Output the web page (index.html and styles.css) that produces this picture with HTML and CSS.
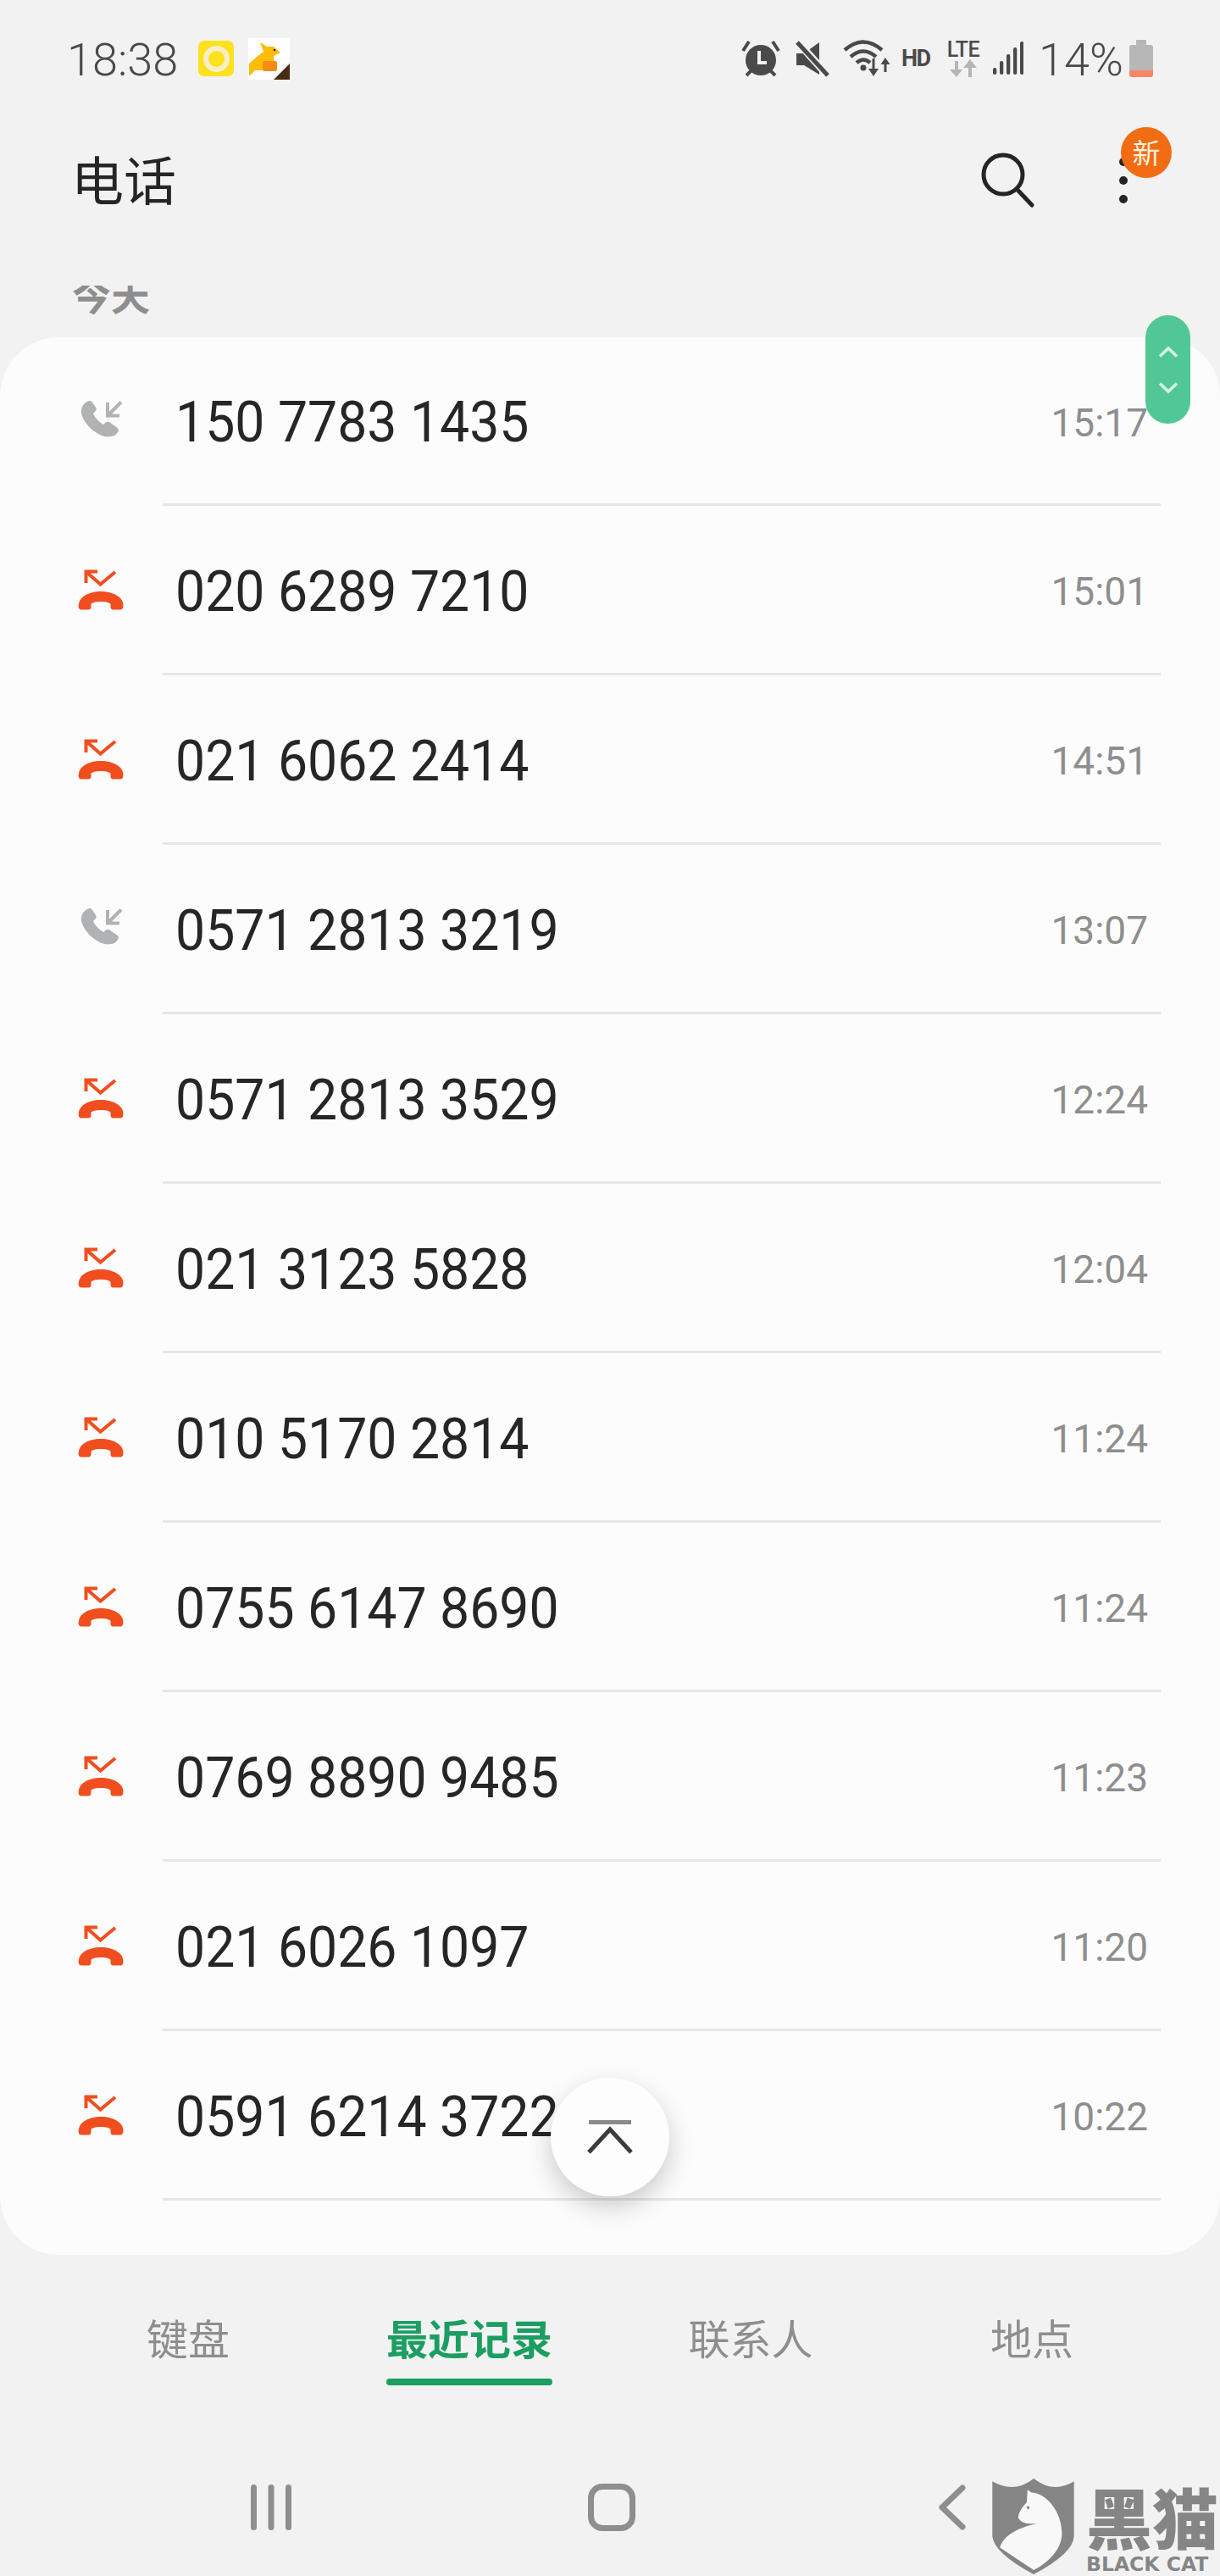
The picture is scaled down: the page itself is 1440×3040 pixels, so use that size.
FILE: index.html
```html
<!DOCTYPE html>
<html lang="zh-CN">
    <head>
        <meta charset="UTF-8" />
        <meta name="viewport" content="width=device-width, initial-scale=1.0" />
        <title>电话</title>
        <link rel="stylesheet" href="styles.css">
    </head>
    <body>
        <svg class="defs" width="0" height="0">
            <symbol id="icon-received" viewBox="0 0 60 60">
                <path fill="#b0b2b4" d="M14 5.5c2-.8 3.5-.3 4.5.8l4.5 6.5c1 1.7.8 3.3-.5 4.7l-2.5 2.5c2 5 7 10 12 13l3-2.5c1.5-1 3-1 4.5 0l8.5 6c2 1.500 2.500 4 1.200 5.500c-2 3-5 5-9 5C30 50 10 36 6 20C5 14 8 8 14 5.500z"/>
                <path fill="none" stroke="#b0b2b4" stroke-width="4" d="M37 7V22.500H51M37 22.500L53 6.500"/>
            </symbol>
            <symbol id="icon-missed" viewBox="0 0 60 60">
                <path fill="#f04e1e" d="M3 47C3 38 14 31 29 31C44 31 55.500 38 55.500 47c0 3-1 5.500-3 5.500h-9c-2 0-3-1.500-3-3.500v-3c0-1.500-5-3-11.500-3c-6.500 0-11.500 1.500-11.500 3v3c0 2-1 3.500-3 3.500h-9c-2 0-3-2.500-3-5.500z"/>
                <path fill="none" stroke="#f04e1e" stroke-width="4" d="M11.500 21V7.500H25M12 8L28.500 22.500L46 8"/>
            </symbol>
        </svg>

        <div class="phone">
            <div class="status-bar">
                <span class="status-time">18:38</span>
                <span class="app-yellow"><span class="app-yellow-ring"></span></span>
                <svg class="app-kangaroo" width="49" height="49" viewBox="0 0 49 49">
                    <rect width="49" height="49" fill="#fff"/>
                    <path fill="#fcbc0c" d="M14 5L22 10L30 10L38 17L30 21L30 27L17 28L17 38L8 38L1 45V30L10 22L18 16z"/>
                    <rect x="17" y="27" width="17" height="12" rx="2" fill="#f68c12"/>
                    <circle cx="31" cy="14" r="1.300" fill="#2a1a0a"/>
                    <path fill="#4a2a12" d="M49 30L30 49H49z"/>
                </svg>
                <span class="status-spacer"></span>
                <svg class="ic-alarm" width="46" height="44" viewBox="0 0 46 44">
                    <circle cx="23" cy="24" r="18" fill="#4a4a4a"/>
                    <path fill="none" stroke="#f2f2f2" stroke-width="4" d="M21 13V27H30"/>
                    <path fill="none" stroke="#4a4a4a" stroke-width="4" d="M2 13L9 2M44 13L37 2M6 42L12 36M40 42L34 36"/>
                </svg>
                <svg class="ic-mute" width="40" height="44" viewBox="0 0 40 44">
                    <path fill="#4a4a4a" d="M1 16H10L28 3V41L10 30H1z"/>
                    <path stroke="#f2f2f2" stroke-width="9" d="M3 3L37 41"/>
                    <path stroke="#4a4a4a" stroke-width="5" d="M2 3L38 42"/>
                </svg>
                <svg class="ic-wifi" width="56" height="44" viewBox="0 0 56 44">
                    <path fill="none" stroke="#4a4a4a" stroke-width="4.500" d="M2 12Q24-7 46 12M9 20Q24 7 39 20M16 27Q24 20 32 27"/>
                    <circle cx="24" cy="33" r="3.500" fill="#4a4a4a"/>
                    <path fill="#4a4a4a" d="M34.500 22h3v12h4.500L36 43L30 34h4.500zM48.500 38h3V29h4L50 21L44.500 29h4z"/>
                </svg>
                <span class="status-hd">HD</span>
                <span class="status-lte">
                    <span class="status-lte-text">LTE</span>
                    <svg width="32" height="21" viewBox="0 0 32 21">
                        <path fill="#b5b5b5" d="M6 2h4v10h5L8 21L0 12h6zM22 21h4V10h6L24 0L16 10h6z"/>
                    </svg>
                </span>
                <svg class="ic-signal" width="36" height="40" viewBox="0 0 36 40" fill="#4a4a4a">
                    <rect x="0" y="31" width="4.300" height="8" rx="2"/>
                    <rect x="8" y="23" width="4.300" height="16" rx="2"/>
                    <rect x="16" y="15" width="4.300" height="24" rx="2"/>
                    <rect x="24" y="7" width="4.300" height="32" rx="2"/>
                    <rect x="32" y="0" width="4.300" height="39" rx="2"/>
                </svg>
                <span class="status-pct">14%</span>
                <svg class="ic-battery" width="28" height="44" viewBox="0 0 28 44">
                    <path fill="#b7b7b7" d="M8 1a1 1 0 0 1 1-1h10a1 1 0 0 1 1 1v5h5a3 3 0 0 1 3 3v27H0V9a3 3 0 0 1 3-3h5z"/>
                    <path fill="#f98566" d="M0 36h28v5a3 3 0 0 1-3 3H3a3 3 0 0 1-3-3z"/>
                </svg>
            </div>

            <div class="app-header">
                <h1 class="app-title">电话</h1>
                <svg class="ic-search" width="66" height="66" viewBox="0 0 66 66">
                    <circle cx="27" cy="26" r="23" fill="none" stroke="#252525" stroke-width="5"/>
                    <path stroke="#252525" stroke-width="5" stroke-linecap="round" d="M43 43L61 62"/>
                </svg>
                <div class="menu">
                    <span class="menu-dot"></span>
                    <span class="menu-dot"></span>
                    <span class="menu-dot"></span>
                    <span class="menu-badge">新</span>
                </div>
            </div>

            <div class="day-clip"><div class="day-label">今天</div></div>

            <div class="card">
                <div class="row">
                    <svg class="row-icon"><use href="#icon-received"/></svg>
                    <div class="row-body"><span class="row-number">150 7783 1435</span><span class="row-time">15:17</span></div>
                </div>
                <div class="row">
                    <svg class="row-icon"><use href="#icon-missed"/></svg>
                    <div class="row-body"><span class="row-number">020 6289 7210</span><span class="row-time">15:01</span></div>
                </div>
                <div class="row">
                    <svg class="row-icon"><use href="#icon-missed"/></svg>
                    <div class="row-body"><span class="row-number">021 6062 2414</span><span class="row-time">14:51</span></div>
                </div>
                <div class="row">
                    <svg class="row-icon"><use href="#icon-received"/></svg>
                    <div class="row-body"><span class="row-number">0571 2813 3219</span><span class="row-time">13:07</span></div>
                </div>
                <div class="row">
                    <svg class="row-icon"><use href="#icon-missed"/></svg>
                    <div class="row-body"><span class="row-number">0571 2813 3529</span><span class="row-time">12:24</span></div>
                </div>
                <div class="row">
                    <svg class="row-icon"><use href="#icon-missed"/></svg>
                    <div class="row-body"><span class="row-number">021 3123 5828</span><span class="row-time">12:04</span></div>
                </div>
                <div class="row">
                    <svg class="row-icon"><use href="#icon-missed"/></svg>
                    <div class="row-body"><span class="row-number">010 5170 2814</span><span class="row-time">11:24</span></div>
                </div>
                <div class="row">
                    <svg class="row-icon"><use href="#icon-missed"/></svg>
                    <div class="row-body"><span class="row-number">0755 6147 8690</span><span class="row-time">11:24</span></div>
                </div>
                <div class="row">
                    <svg class="row-icon"><use href="#icon-missed"/></svg>
                    <div class="row-body"><span class="row-number">0769 8890 9485</span><span class="row-time">11:23</span></div>
                </div>
                <div class="row">
                    <svg class="row-icon"><use href="#icon-missed"/></svg>
                    <div class="row-body"><span class="row-number">021 6026 1097</span><span class="row-time">11:20</span></div>
                </div>
                <div class="row">
                    <svg class="row-icon"><use href="#icon-missed"/></svg>
                    <div class="row-body"><span class="row-number">0591 6214 3722</span><span class="row-time">10:22</span></div>
                </div>
            </div>

            <div class="tabs">
                <div class="tab"><span class="tab-label">键盘</span></div>
                <div class="tab active"><span class="tab-label">最近记录</span></div>
                <div class="tab"><span class="tab-label">联系人</span></div>
                <div class="tab"><span class="tab-label">地点</span></div>
            </div>

            <div class="nav">
                <svg width="48" height="54" viewBox="0 0 48 54" fill="#8e8e8e">
                    <rect x="0" y="0" width="7" height="54" rx="3.500"/>
                    <rect x="20.500" y="0" width="7" height="54" rx="3.500"/>
                    <rect x="41" y="0" width="7" height="54" rx="3.500"/>
                </svg>
                <span class="nav-home"></span>
                <svg width="32" height="54" viewBox="0 0 32 54">
                    <path fill="none" stroke="#8e8e8e" stroke-width="7" stroke-linecap="round" stroke-linejoin="round" d="M28 4L4 27L28 50"/>
                </svg>
            </div>

            <!-- floating bits -->
            <div class="scroll-pill">
                <svg width="24" height="14" viewBox="0 0 24 14"><path fill="none" stroke="#d8f3e6" stroke-width="3.500" d="M2 12.500L12 3L22 12.500"/></svg>
                <svg width="24" height="14" viewBox="0 0 24 14"><path fill="none" stroke="#d8f3e6" stroke-width="3.500" d="M2 1.500L12 11L22 1.500"/></svg>
            </div>

            <div class="fab">
                <svg width="54" height="40" viewBox="0 0 54 40">
                    <path stroke="#8a8a8a" stroke-width="5" d="M2 2.500H52"/>
                    <path fill="none" stroke="#3c3c3c" stroke-width="5" d="M2 38L27 11L52 38"/>
                </svg>
            </div>

            <div class="watermark">
                <svg width="97" height="113" viewBox="213 75 290 340">
                    <path fill="#858585" d="M213 85Q290 130 360 75Q430 130 503 85V280Q500 340 360 415Q220 340 213 280z"/>
                    <path fill="#f8f8f8" d="M338 115L352 125C400 125 460 190 460 270C460 320 420 370 360 400L240 320C250 280 300 250 370 235C350 235 320 240 305 215C305 195 320 175 335 160z"/>
                    <circle cx="340" cy="178" r="5" fill="#858585"/>
                </svg>
                <div class="watermark-text">
                    <div class="watermark-cn">黑猫</div>
                    <div class="watermark-en">BLACK CAT</div>
                </div>
            </div>
        </div>
    </body>
</html>
```

FILE: styles.css
```css
body {
    margin: 0;
    background: #f2f2f2;
    font-family: Roboto, "Noto Sans CJK SC", sans-serif;
}
.defs {
    position: absolute;
}
.phone {
    position: relative;
    width: 1440px;
    height: 3040px;
    overflow: hidden;
    background: #f2f2f2;
}

/* status bar */
.status-bar {
    display: flex;
    align-items: center;
    height: 138px;
    padding: 0 79px 0 79px;
    color: #4a4a4a;
}
.status-time {
    width: 155px;
    padding-top: 2px;
    font-size: 54px;
    font-weight: 300;
}
.app-yellow {
    display: flex;
    align-items: center;
    justify-content: center;
    width: 42px;
    height: 42px;
    border-radius: 7px;
    background: #fde11f;
}
.app-yellow-ring {
    width: 19px;
    height: 19px;
    border: 6px solid #f6efc8;
    border-radius: 50%;
}
.app-kangaroo {
    margin-left: 17px;
}
.status-spacer {
    flex: 1;
}
.ic-mute {
    margin-left: 18px;
}
.ic-wifi {
    margin-left: 16px;
}
.status-hd {
    width: 35px;
    margin-left: 13px;
    font-size: 27px;
    font-weight: 700;
    letter-spacing: -1.5px;
}
.status-lte {
    display: flex;
    flex-direction: column;
    align-items: center;
    width: 42px;
    margin-left: 17px;
}
.status-lte-text {
    font-size: 25px;
    font-weight: 500;
    line-height: 23px;
    letter-spacing: -0.5px;
}
.ic-signal {
    margin-left: 14px;
}
.status-pct {
    width: 98px;
    margin-left: 18px;
    padding-top: 2px;
    font-size: 54px;
    font-weight: 300;
    white-space: nowrap;
}
.ic-battery {
    margin-left: 9px;
}

/* header */
.app-header {
    display: flex;
    align-items: center;
    height: 150px;
    padding: 0 0 0 84px;
}
.app-title {
    flex: 1;
    margin: 0 0 6px;
    font-family: "Noto Sans CJK SC", sans-serif;
    font-size: 62px;
    font-weight: 400;
    color: #252525;
}
.ic-search {
    margin-right: 98px;
}
.menu {
    position: relative;
    display: flex;
    flex-direction: column;
    gap: 12px;
    width: 10px;
    margin-right: 109px;
}
.menu-dot {
    width: 10px;
    height: 10px;
    border-radius: 50%;
    background: #252525;
}
.menu-badge {
    position: absolute;
    top: -36px;
    left: 2px;
    width: 60px;
    height: 60px;
    border-radius: 50%;
    background: #f26c13;
    color: #fff3e0;
    font-family: "Noto Sans CJK SC", sans-serif;
    font-size: 33px;
    line-height: 58px;
    text-align: center;
}

/* 今天 is cut off by the sticky header */
.day-clip {
    height: 61px;
    margin-top: 49px;
    padding-left: 85px;
    overflow: hidden;
}
.day-label {
    margin-top: -14px;
    font-family: "Noto Sans CJK SC", sans-serif;
    font-size: 46px;
    font-weight: 700;
    line-height: 46px;
    color: #8e8e8e;
}

/* call list */
.card {
    height: 2263px;
    border-radius: 70px;
    background: #fcfcfc;
}
.row {
    display: flex;
    height: 200px;
}
.row:first-child {
    height: 199px;
}
.row-icon {
    flex: none;
    width: 60px;
    height: 60px;
    margin: auto 42px auto 90px;
}
.row-body {
    flex: 1;
    display: flex;
    align-items: center;
    justify-content: space-between;
    margin-right: 70px;
    padding: 5px 15px 0;
    border-bottom: 3px solid #e6e6e6;
}
/* the phone's digits run taller than Roboto's */
.row-number {
    display: inline-block;
    font-size: 62.5px;
    color: #262626;
    transform: scaleY(1.06);
}
.row-time {
    font-size: 46px;
    color: #8e8e8e;
}

/* bottom tabs */
.tabs {
    display: grid;
    grid-template-columns: repeat(4, 332px);
    padding: 67px 56px 0;
    height: 132px;
}
.tab {
    text-align: center;
}
.tab-label {
    display: inline-block;
    font-family: "Noto Sans CJK SC", sans-serif;
    font-size: 49px;
    line-height: 60px;
    color: #8e8e8e;
}
.tab-label::after {
    content: "";
    display: block;
    height: 8px;
    margin-top: 19px;
    border-radius: 4px;
}
.tab.active .tab-label {
    font-weight: 700;
    color: #1c9e62;
}
.tab.active .tab-label::after {
    background: #1c9e62;
}

/* system nav */
.nav {
    display: grid;
    grid-template-columns: repeat(3, 402px);
    justify-items: center;
    align-items: center;
    height: 180px;
    padding-top: 9px;
    padding-left: 119px;
}
.nav-home {
    box-sizing: border-box;
    width: 56px;
    height: 56px;
    border: 7px solid #8e8e8e;
    border-radius: 17px;
}

/* overlays */
.scroll-pill {
    position: absolute;
    top: 372px;
    left: 1352px;
    box-sizing: border-box;
    display: flex;
    flex-direction: column;
    align-items: center;
    justify-content: center;
    gap: 29px;
    width: 53px;
    height: 128px;
    border-radius: 27px;
    background: #52c796;
}
.fab {
    position: absolute;
    top: 2452px;
    left: 650px;
    display: flex;
    align-items: center;
    justify-content: center;
    width: 140px;
    height: 140px;
    border-radius: 50%;
    background: #fdfdfd;
    box-shadow: 0 12px 30px rgba(0, 0, 0, 0.2);
}
.watermark {
    position: absolute;
    top: 2925px;
    left: 1171px;
    display: flex;
    gap: 14px;
}
.watermark-text {
    width: 160px;
    padding-top: 4px;
    color: #858585;
}
.watermark-cn {
    font-family: "Noto Sans CJK SC", sans-serif;
    font-size: 78px;
    font-weight: 900;
    line-height: 80px;
}
.watermark-en {
    margin-top: 4px;
    font-family: "DejaVu Sans", sans-serif;
    font-size: 23.500px;
    font-weight: 700;
    line-height: 26px;
    white-space: nowrap;
}
```
